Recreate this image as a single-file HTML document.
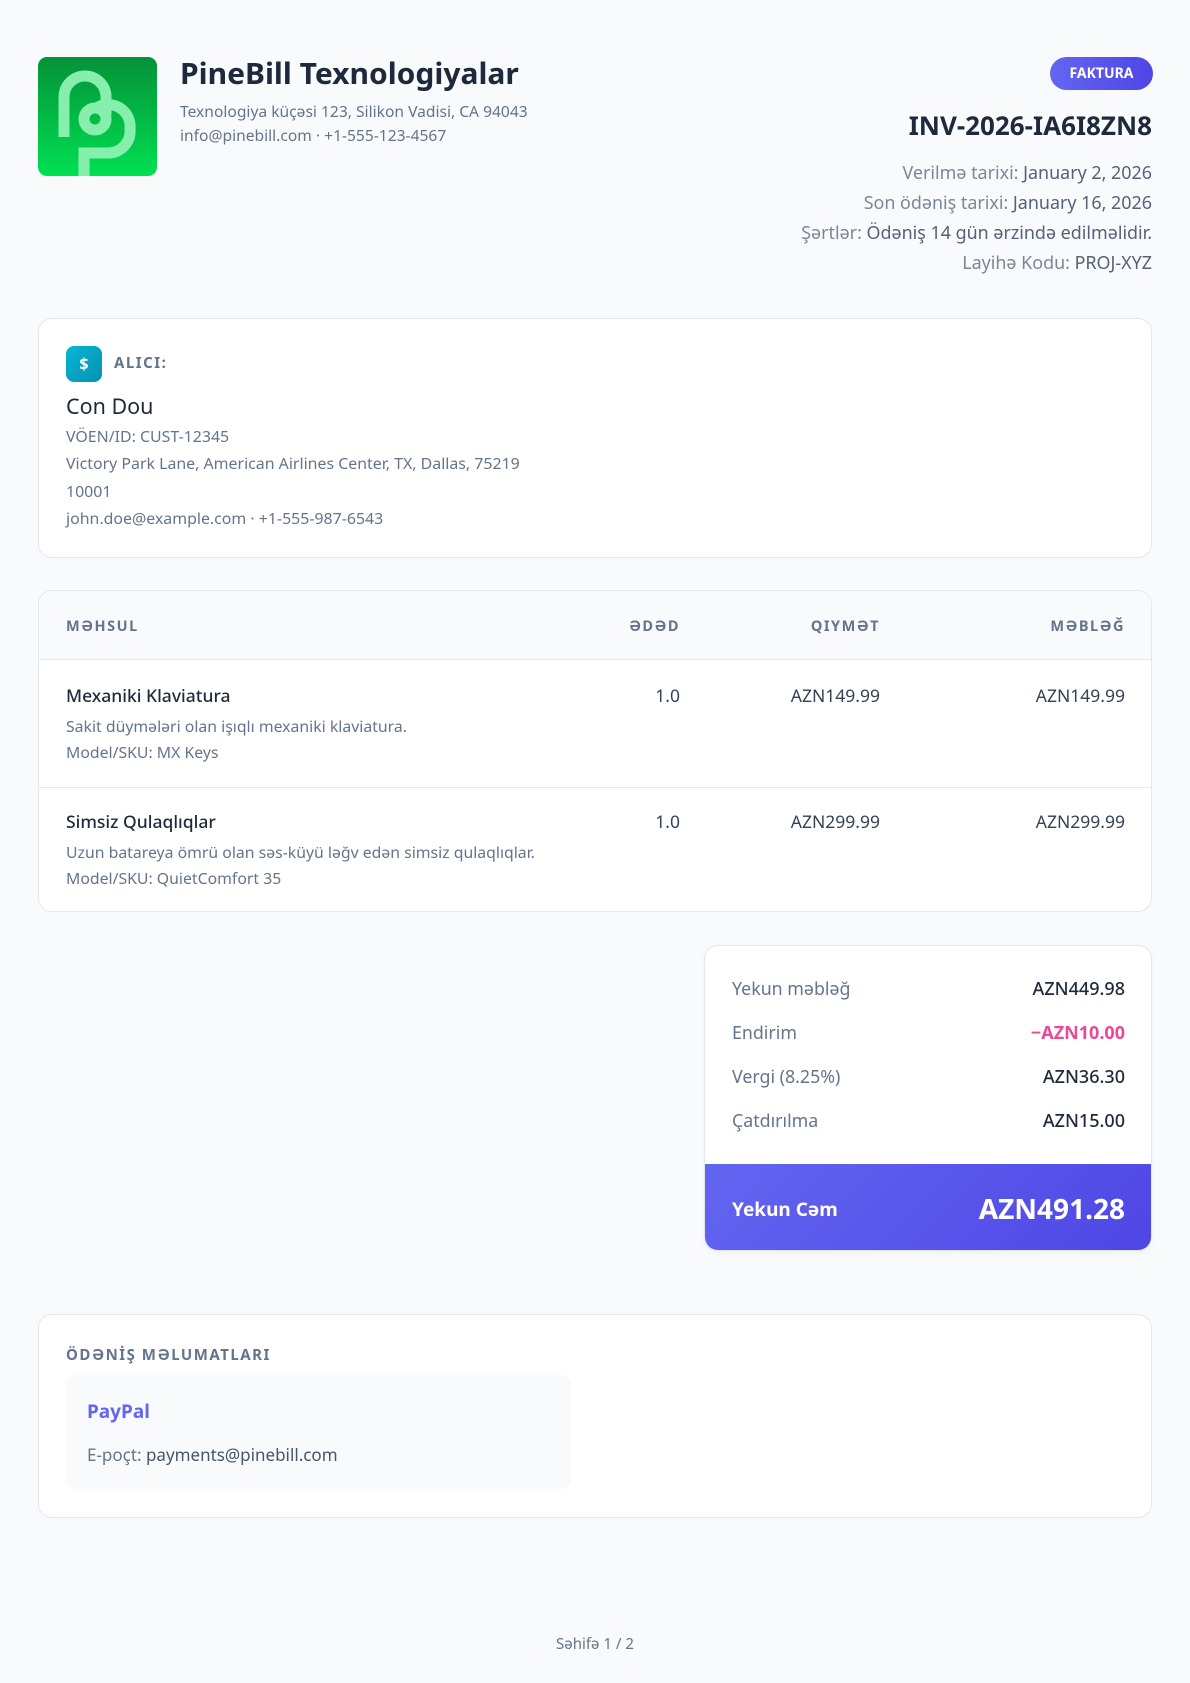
<!DOCTYPE html>
<html><head><meta charset="utf-8"><style>
*{margin:0;padding:0;box-sizing:border-box}
body{width:1190px;height:1683px;background:#f8fafc;font-family:"Noto Sans","Liberation Sans","DejaVu Sans",sans-serif;color:#1e293b;position:relative;overflow:hidden}
.a{position:absolute;white-space:nowrap}
.card{position:absolute;background:#fff;border:1.5px solid #e2e8f0;border-radius:14px}
.mut{color:#64748b}
.r{text-align:right}
</style></head><body>
<svg class="a" style="left:38px;top:57px" width="119" height="119" viewBox="0 0 119 119">
<defs><linearGradient id="g" x1="0" y1="0" x2="0" y2="1"><stop offset="0" stop-color="#059138"/><stop offset="1" stop-color="#00e052"/></linearGradient></defs>
<rect width="119" height="119" rx="9" fill="url(#g)"/>
<g fill="none" stroke="#86efac" stroke-width="11">
<path d="M26 80 V40 A21 21 0 0 1 68 40 V58"/>
<circle cx="57" cy="62" r="11"/>
<path d="M60 50 A22 22 0 0 1 92 72 A22 22 0 0 1 70 96 H46 V122"/>
</g></svg>
<div class="a" style="left:180px;top:52px;font-size:30px;font-weight:700;color:#1e293b">PineBill Texnologiyalar</div>
<div class="a mut" style="left:180px;top:100px;font-size:15.6px">Texnologiya küçəsi 123, Silikon Vadisi, CA 94043</div>
<div class="a mut" style="left:180px;top:124px;font-size:15.6px">info@pinebill.com · +1-555-123-4567</div>

<div class="a" style="left:1050px;top:57px;width:103px;height:33px;border-radius:17px;background:linear-gradient(90deg,#6366f1,#4f46e5);color:#fff;font-size:14px;font-weight:700;text-align:center;line-height:33px">FAKTURA</div>
<div class="a r" style="right:38px;top:107px;font-size:26px;font-weight:700">INV-2026-IA6I8ZN8</div>
<div class="a r" style="right:38px;top:158px;font-size:17.9px;line-height:30px;color:#7b8798">Verilmə tarixi: <span style="color:#556176">January 2, 2026</span><br>Son ödəniş tarixi: <span style="color:#556176">January 16, 2026</span><br>Şərtlər: <span style="color:#556176">Ödəniş 14 gün ərzində edilməlidir.</span><br>Layihə Kodu: <span style="color:#556176">PROJ-XYZ</span></div>

<div class="card" style="left:38px;top:318px;width:1114px;height:240px"></div>
<div class="a" style="left:66px;top:346px;width:36px;height:36px;border-radius:8px;background:linear-gradient(135deg,#06b6d4,#0891b2);color:#fff;font-weight:700;font-size:16px;text-align:center;line-height:36px">$</div>
<div class="a" style="left:114px;top:353px;font-size:15px;font-weight:700;color:#64748b;letter-spacing:1.5px">ALICI:</div>
<div class="a" style="left:66px;top:392px;font-size:21.5px;color:#1e293b">Con Dou</div>
<div class="a mut" style="left:66px;top:423px;font-size:15.9px;line-height:27.3px">VÖEN/ID: CUST-12345<br>Victory Park Lane, American Airlines Center, TX, Dallas, 75219<br>10001<br>john.doe@example.com · +1-555-987-6543</div>

<div class="card" style="left:38px;top:590px;width:1114px;height:322px;overflow:hidden">
<div style="position:absolute;left:0;top:0;right:0;height:69px;background:#f8fafc;border-bottom:1.5px solid #e2e8f0"></div>
<div style="position:absolute;left:0;top:196px;right:0;border-top:1.5px solid #e2e8f0"></div>
</div>
<div class="a" style="left:66px;top:616px;font-size:14.5px;font-weight:700;color:#64748b;letter-spacing:1.5px">MƏHSUL</div>
<div class="a r" style="right:510px;top:616px;font-size:14.5px;font-weight:700;color:#64748b;letter-spacing:1.5px">ƏDƏD</div>
<div class="a r" style="right:310px;top:616px;font-size:14.5px;font-weight:700;color:#64748b;letter-spacing:1.5px">QIYMƏT</div>
<div class="a r" style="right:65px;top:616px;font-size:14.5px;font-weight:700;color:#64748b;letter-spacing:1.5px">MƏBLƏĞ</div>

<div class="a" style="left:66px;top:684px;font-size:17.5px;font-weight:500">Mexaniki Klaviatura</div>
<div class="a mut" style="left:66px;top:713px;font-size:15.8px;line-height:26px">Sakit düymələri olan işıqlı mexaniki klaviatura.<br>Model/SKU: MX Keys</div>
<div class="a r" style="right:510px;top:684px;font-size:17.5px;color:#334155">1.0</div>
<div class="a r" style="right:310px;top:684px;font-size:17.5px;color:#334155">AZN149.99</div>
<div class="a r" style="right:65px;top:684px;font-size:17.5px;color:#334155">AZN149.99</div>

<div class="a" style="left:66px;top:810px;font-size:17.5px;font-weight:500">Simsiz Qulaqlıqlar</div>
<div class="a mut" style="left:66px;top:839px;font-size:15.8px;line-height:26px">Uzun batareya ömrü olan səs-küyü ləğv edən simsiz qulaqlıqlar.<br>Model/SKU: QuietComfort 35</div>
<div class="a r" style="right:510px;top:810px;font-size:17.5px;color:#334155">1.0</div>
<div class="a r" style="right:310px;top:810px;font-size:17.5px;color:#334155">AZN299.99</div>
<div class="a r" style="right:65px;top:810px;font-size:17.5px;color:#334155">AZN299.99</div>

<div class="card" style="left:704px;top:945px;width:448px;height:306px;overflow:hidden;box-shadow:0 2px 6px rgba(0,0,0,.04)">
<div style="position:absolute;left:0;right:0;bottom:0;height:86px;background:linear-gradient(135deg,#6366f1,#4f46e5)"></div>
</div>
<div class="a mut" style="left:732px;top:967px;font-size:17.8px;line-height:44px">Yekun məbləğ<br>Endirim<br>Vergi (8.25%)<br>Çatdırılma</div>
<div class="a r" style="right:65px;top:967px;font-size:18px;line-height:44px;font-weight:500">AZN449.98<br><span style="color:#ec4899;font-weight:700">−AZN10.00</span><br>AZN36.30<br>AZN15.00</div>
<div class="a" style="left:732px;top:1196px;font-size:19px;font-weight:700;color:#fff">Yekun Cəm</div>
<div class="a r" style="right:65px;top:1190px;font-size:28px;font-weight:700;color:#fff">AZN491.28</div>

<div class="card" style="left:38px;top:1314px;width:1114px;height:204px"></div>
<div class="a" style="left:66px;top:1345px;font-size:15px;font-weight:700;color:#64748b;letter-spacing:1.5px">ÖDƏNİŞ MƏLUMATLARI</div>
<div class="a" style="left:66px;top:1375px;width:505px;height:114px;background:#f8fafc;border-radius:10px"></div>
<div class="a" style="left:87px;top:1398px;font-size:19px;font-weight:700;color:#6366f1">PayPal</div>
<div class="a mut" style="left:87px;top:1443px;font-size:17px">E-poçt: <span style="color:#475569">payments@pinebill.com</span></div>

<div class="a mut" style="left:0;width:1190px;text-align:center;top:1634px;font-size:15px">Səhifə 1 / 2</div>
</body></html>
